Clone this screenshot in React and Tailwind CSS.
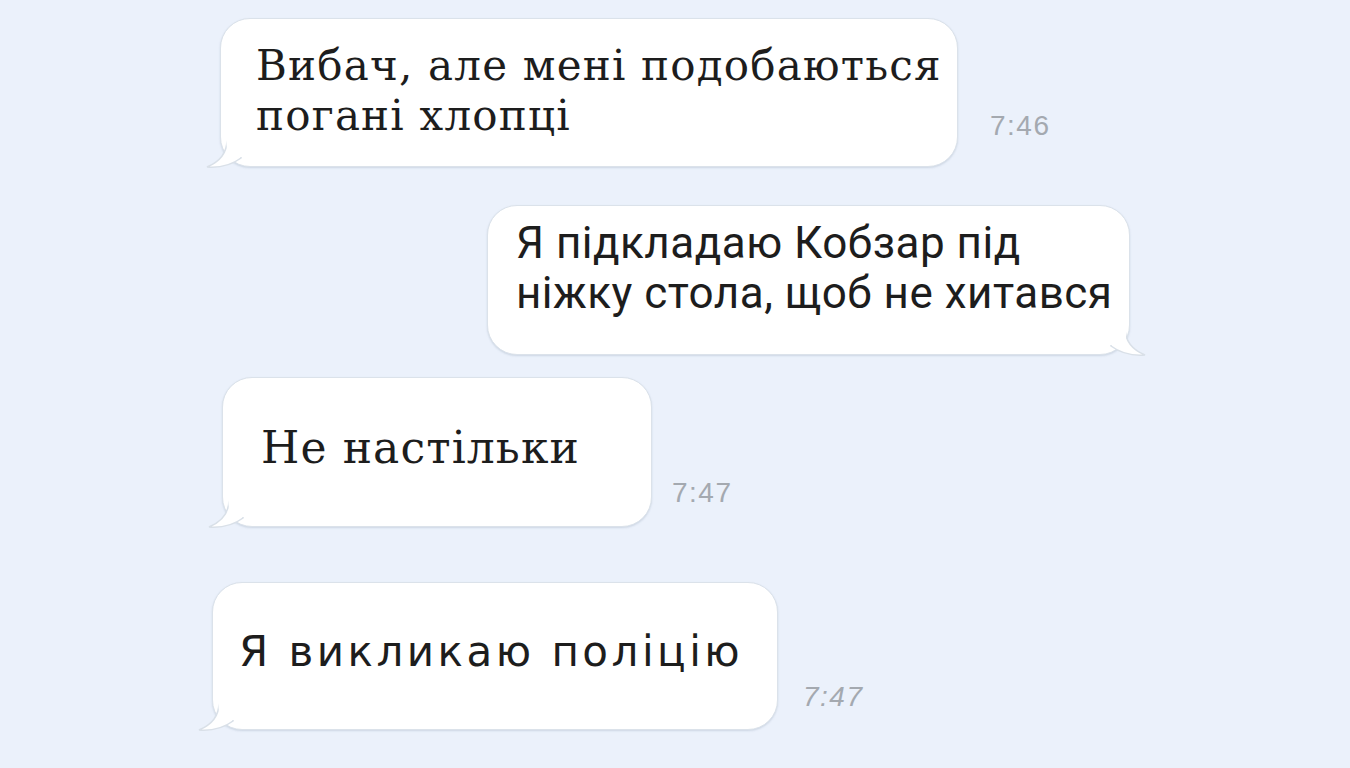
import React from 'react';

const serif = { fontFamily: '"DejaVu Serif", "Liberation Serif", serif' };

function TailLeft() {
    return (
        <svg className="absolute -left-[16px] bottom-[-4px]" width="40" height="30" viewBox="0 0 40 30">
            <path d="M22 0 C22 14 14 22 2 27 C16 28 28 24 36 18 L36 0 Z" fill="#ffffff" stroke="#d9e0e8" strokeWidth="1.5" />
            <path d="M21 0 L38 0 L38 17 L23 17 Z" fill="#ffffff" />
        </svg>
    );
}

function TailRight() {
    return (
        <svg className="absolute -right-[18px] bottom-[-4px]" width="40" height="30" viewBox="0 0 40 30">
            <path d="M18 0 C18 14 26 22 38 27 C24 28 12 24 4 18 L4 0 Z" fill="#ffffff" stroke="#d9e0e8" strokeWidth="1.5" />
            <path d="M2 0 L19 0 L19 17 L2 17 Z" fill="#ffffff" />
        </svg>
    );
}

function Bubble({ children, className, side = 'left' }) {
    return (
        <div className={`relative bg-white rounded-[30px] border border-[#dbe2ea] shadow-[0_1px_2px_rgba(150,165,185,0.35)] ${className}`}>
            {side === 'left' ? <TailLeft /> : <TailRight />}
            <div className="relative whitespace-nowrap">{children}</div>
        </div>
    );
}

function Time({ children, className }) {
    return (
        <span className={`text-[28px] leading-none tracking-[1.5px] text-[#a4a9b0] ${className}`} style={{ fontFamily: '"Liberation Sans", Arial, sans-serif' }}>
            {children}
        </span>
    );
}

export default function App() {
    return (
        <div className="w-[1350px] h-[768px] overflow-hidden bg-[#ebf1fb] pt-[18px] flex flex-col">
            {/* message 1 */}
            <div className="flex items-end ml-[220px]">
                <Bubble className="w-[738px] h-[149px] pl-[35px] pt-[22px]">
                    <p className="text-[42px] leading-[50px] text-[#1d1d1d] tracking-[1.2px]" style={serif}>
                        Вибач, але мені подобаються<br />погані хлопці
                    </p>
                </Bubble>
                <Time className="ml-[32px] mb-[27px]">7:46</Time>
            </div>

            {/* message 2 */}
            <div className="flex items-end ml-[487px] mt-[38px]">
                <Bubble side="right" className="w-[643px] h-[150px] pl-[28px] pt-[12px]">
                    <p className="text-[44px] leading-[50px] text-[#1d1d1d] tracking-[0.5px]" style={{ fontFamily: 'Roboto, "Liberation Sans", sans-serif' }}>
                        Я підкладаю Кобзар під<br />ніжку стола, щоб не хитався
                    </p>
                </Bubble>
            </div>

            {/* message 3 */}
            <div className="flex items-end ml-[222px] mt-[22px]">
                <Bubble className="w-[430px] h-[150px] pl-[38px] pt-[45px]">
                    <p className="text-[44px] leading-[50px] text-[#1d1d1d] tracking-[1.1px]" style={serif}>
                        Не настільки
                    </p>
                </Bubble>
                <Time className="ml-[20px] mb-[20px]">7:47</Time>
            </div>

            {/* message 4 */}
            <div className="flex items-end ml-[212px] mt-[55px]">
                <Bubble className="w-[566px] h-[148px] pl-[26px] pt-[44px]">
                    <p className="text-[42px] leading-[50px] text-[#1d1d1d] tracking-[3.5px]" style={{ fontFamily: '"DejaVu Sans", "Noto Sans", sans-serif' }}>
                        Я викликаю поліцію
                    </p>
                </Bubble>
                <Time className="ml-[25px] mb-[19px] italic">7:47</Time>
            </div>
        </div>
    );
}
